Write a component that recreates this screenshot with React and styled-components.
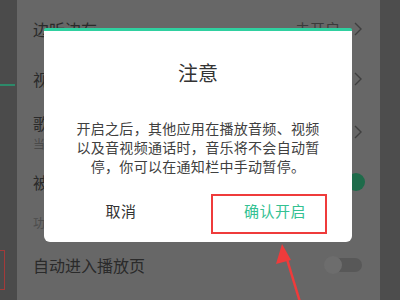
import React from 'react'
import styled, { createGlobalStyle } from 'styled-components'

const Global = createGlobalStyle`
  html, body {
    margin: 0;
    padding: 0;
    background: #676767;
  }
  body {
    font-family: "Noto Sans CJK SC", "Noto Sans", sans-serif;
  }
`

const Screen = styled.div`
  position: relative;
  width: 400px;
  height: 300px;
  display: flex;
  overflow: hidden;
`

const LeftStrip = styled.div`
  width: 17px;
  background: #4b4b4b;
  display: flex;
  flex-direction: column;
  padding-top: 84px;
  box-sizing: border-box;
`

const StripLine = styled.div`
  width: 15px;
  height: 2px;
  background: #2d8a6a;
`

const StripMark = styled.div`
  margin-top: 164px;
  width: 4px;
  height: 38px;
  border: 1px solid #a33a3a;
  border-left: none;
`

const Main = styled.div`
  flex: 1;
  background: #676767;
  display: flex;
  flex-direction: column;
  padding: 5px 0 0 16px;
  box-sizing: border-box;
`

const RightStrip = styled.div`
  width: 20px;
  background: #4d4d4d;
`

const Row = styled.div`
  height: ${p => p.$h}px;
  display: flex;
  align-items: center;
  justify-content: space-between;
  padding-right: 18px;
`

const RowText = styled.div`
  display: flex;
  flex-direction: column;
  gap: 4px;
`

const Label = styled.span`
  font-size: 16px;
  color: #2a2a2a;
  line-height: 20px;
`

const Sub = styled.span`
  font-size: 12px;
  color: #4a4a4a;
  line-height: 14px;
`

const Section = styled.div`
  height: 35px;
  display: flex;
  align-items: center;
  font-size: 12px;
  color: #4c4c4c;
`

const RightSide = styled.div`
  display: flex;
  align-items: center;
  gap: 14px;
  font-size: 15px;
  color: #3a3a3a;
`

const Chevron = () => (
  <svg width="8" height="14" viewBox="0 0 8 14">
    <path d="M1 1 L7 7 L1 13" fill="none" stroke="#3f3f3f" strokeWidth="1.4" />
  </svg>
)

const Toggle = styled.div`
  position: relative;
  width: 34px;
  height: 14px;
  border-radius: 7px;
  background: ${p => (p.$on ? '#1e6b4a' : '#585858')};
  &::after {
    content: '';
    position: absolute;
    top: -2px;
    ${p => (p.$on ? 'right: -3px;' : 'left: -4px;')}
    width: 18px;
    height: 18px;
    border-radius: 50%;
    background: ${p => (p.$on ? '#1e6b4a' : '#6d6d6d')};
  }
`

const Dialog = styled.div`
  position: absolute;
  left: 44px;
  top: 28px;
  width: 308px;
  height: 214px;
  background: #ffffff;
  border-top: 3px solid #2fd0a0;
  border-radius: 2px 2px 6px 6px;
  box-sizing: border-box;
  display: flex;
  flex-direction: column;
  align-items: center;
`

const Title = styled.div`
  margin-top: 30px;
  font-size: 20px;
  line-height: 24px;
  color: #333333;
`

const Body = styled.p`
  margin: 34px 0 0;
  width: 248px;
  font-size: 14px;
  line-height: 19px;
  letter-spacing: 0.3px;
  color: #404040;
  text-align: center;
`

const Buttons = styled.div`
  margin-top: auto;
  width: 100%;
  height: 58px;
  display: flex;
  align-items: center;
  padding-bottom: 6px;
  box-sizing: border-box;
`

const Button = styled.div`
  flex: 1;
  text-align: center;
  font-size: 15px;
  letter-spacing: 0.5px;
  color: ${p => (p.$primary ? '#34c192' : '#333333')};
`

const RedBox = styled.div`
  position: absolute;
  left: 211px;
  top: 194px;
  width: 116px;
  height: 40px;
  border: 2px solid #ef3b3b;
  box-sizing: border-box;
`

const Arrow = styled.svg`
  position: absolute;
  left: 260px;
  top: 240px;
`

export default function App() {
  return (
    <Screen>
      <Global />
      <LeftStrip>
        <StripLine />
        <StripMark />
      </LeftStrip>
      <Main>
        <Row $h={47}>
          <Label>边听边存</Label>
          <RightSide>
            未开启
            <Chevron />
          </RightSide>
        </Row>
        <Row $h={53}>
          <Label>视频</Label>
          <RightSide>
            <Chevron />
          </RightSide>
        </Row>
        <Row $h={53}>
          <RowText>
            <Label>歌词</Label>
            <Sub>当前</Sub>
          </RowText>
          <RightSide>
            <Chevron />
          </RightSide>
        </Row>
        <Row $h={47}>
          <Label>被打</Label>
          <Toggle $on />
        </Row>
        <Section>功能</Section>
        <Row $h={50}>
          <Label>自动进入播放页</Label>
          <Toggle />
        </Row>
      </Main>
      <RightStrip />
      <Dialog>
        <Title>注意</Title>
        <Body>
          开启之后，其他应用在播放音频、视频以及音视频通话时，音乐将不会自动暂停，你可以在通知栏中手动暂停。
        </Body>
        <Buttons>
          <Button>取消</Button>
          <Button $primary>确认开启</Button>
        </Buttons>
      </Dialog>
      <RedBox />
      <Arrow width="50" height="60" viewBox="0 0 50 60">
        <path d="M40 62 L26 16" stroke="#ef3b3b" strokeWidth="2.5" fill="none" />
        <polygon points="22,4 16,24 31,20" fill="#ef3b3b" />
      </Arrow>
    </Screen>
  )
}
